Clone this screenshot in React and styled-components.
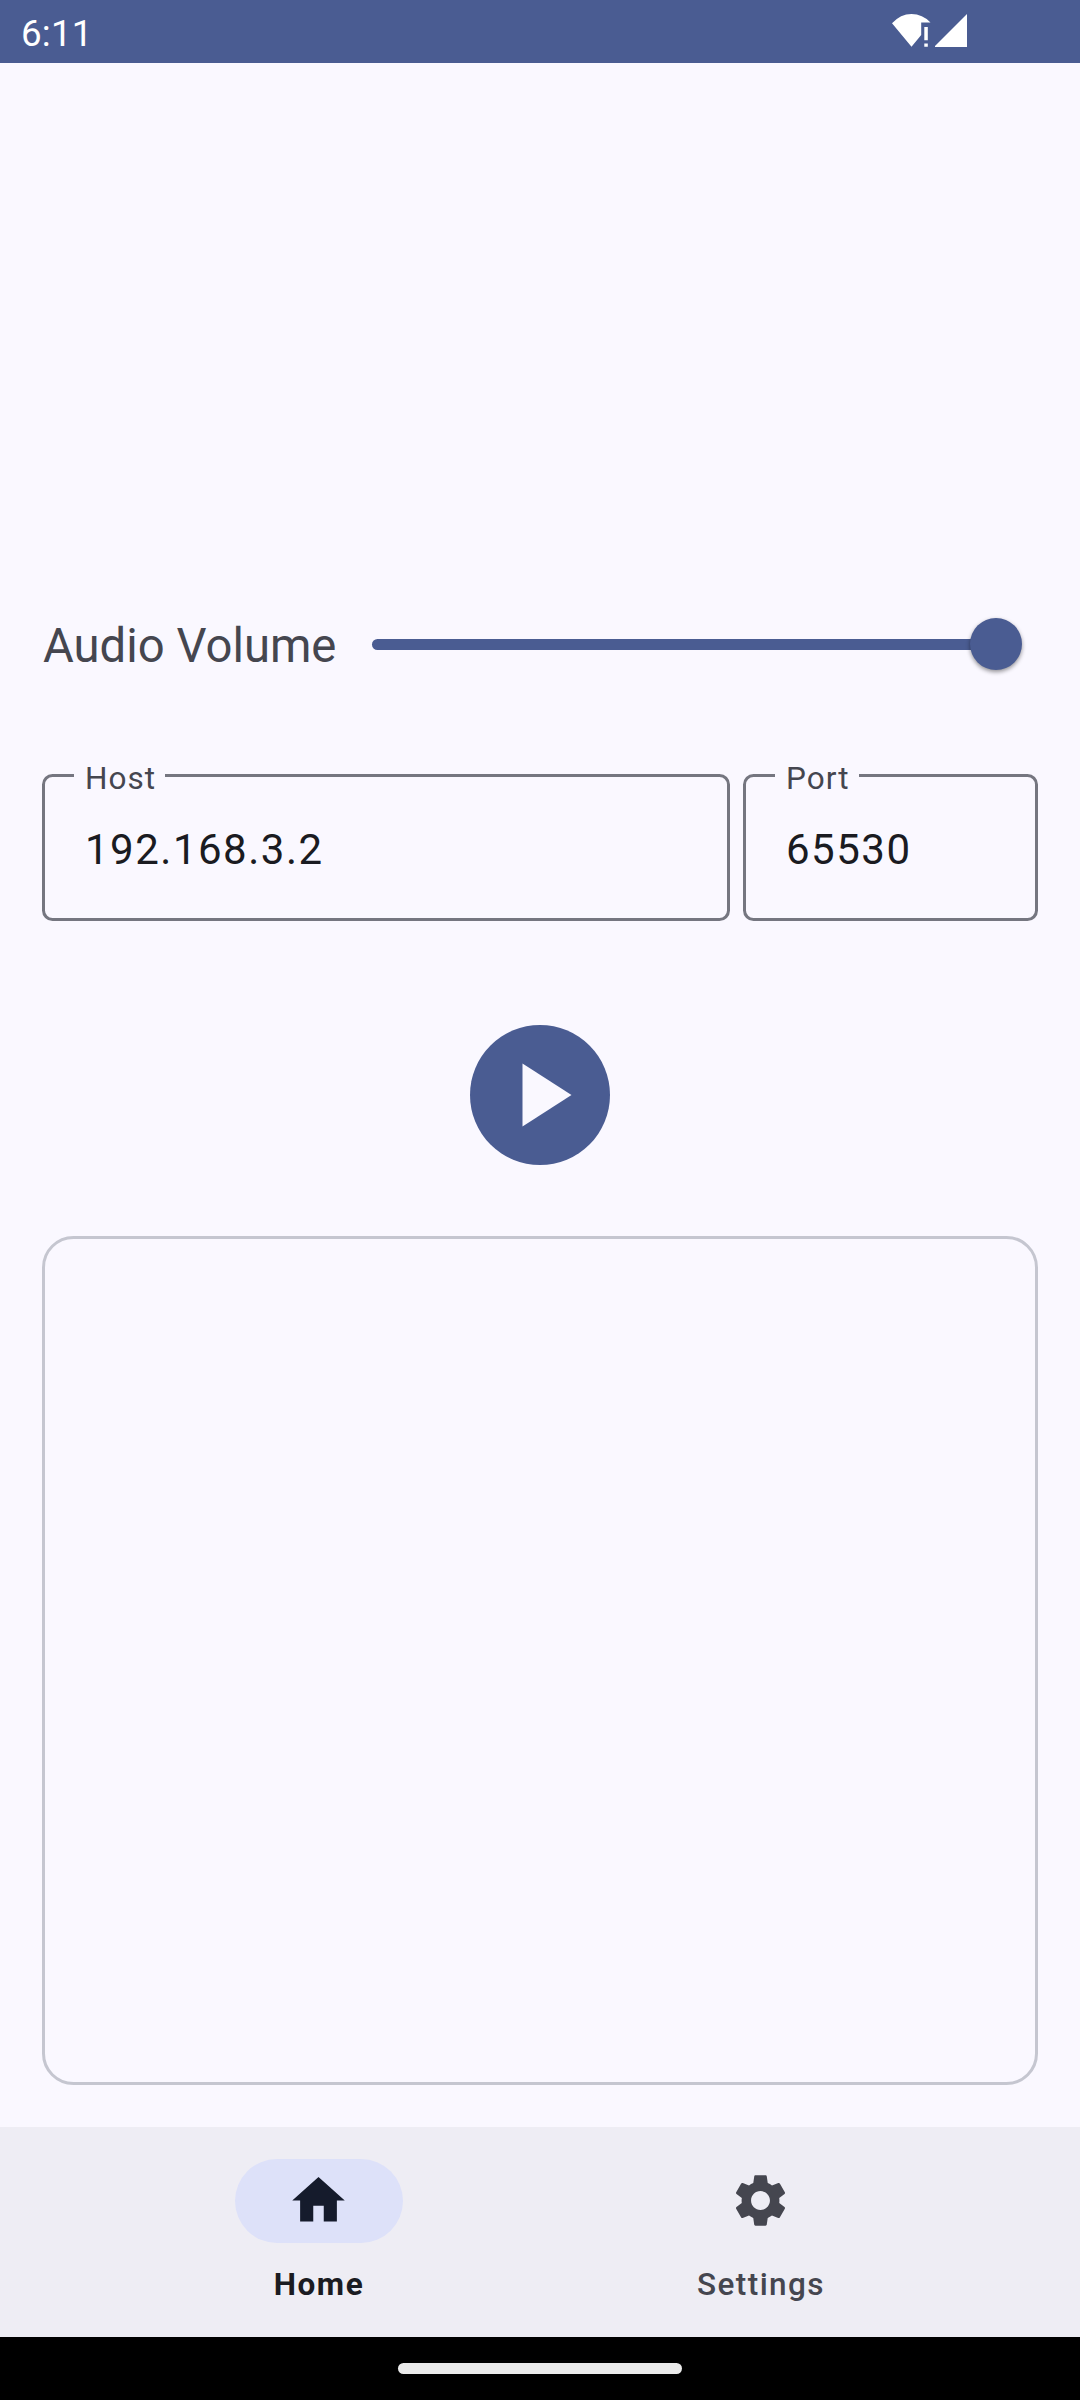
import React from 'react';
import styled, { createGlobalStyle } from 'styled-components';

const color = {
  primary: '#4a5c92',
  surface: '#faf8ff',
  navSurface: '#eeedf4',
  text: '#1a1b21',
  muted: '#45464f',
  outline: '#757680',
  outlineSoft: '#c5c6d0',
  pill: '#dde1f9',
  onPill: '#151b2c',
};

const GlobalStyle = createGlobalStyle`
  * { box-sizing: border-box; }
  body { margin: 0; background: ${color.surface}; font-family: Roboto, sans-serif; }
`;

const Screen = styled.div`
  width: 1080px;
  height: 2400px;
  display: flex;
  flex-direction: column;
  background: ${color.surface};
  overflow: hidden;
`;

const StatusBar = styled.header`
  height: 63px;
  flex: none;
  display: flex;
  justify-content: space-between;
  padding: 0 113px 0 21px;
  background: ${color.primary};
  color: #fff;
`;

const Clock = styled.span`
  font-size: 36.75px;
  line-height: 43px;
  letter-spacing: 0.2px;
  padding-top: 12px;
`;

const StatusIcons = styled.div`
  display: flex;
  gap: 4px;
  padding-top: 14px;
  svg { display: block; }
`;

const Main = styled.main`
  flex: 1;
  display: flex;
  flex-direction: column;
  padding: 554px 42px 42px;
`;

const VolumeRow = styled.div`
  display: flex;
  align-items: center;
  height: 54px;
`;

const VolumeLabel = styled.label`
  width: 329.5px;
  padding: 4px 0 0 1px;
  font-size: 47.25px;
  line-height: 54px;
  white-space: nowrap;
  color: ${color.muted};
`;

const Slider = styled.div`
  width: 650.5px;
  display: flex;
  align-items: center;
`;

const Track = styled.div`
  flex: 1;
  height: 11px;
  margin-right: -26px;
  border-radius: 6px 0 0 6px;
  background: ${color.primary};
`;

const Thumb = styled.div`
  width: 52px;
  height: 52px;
  border-radius: 50%;
  background: ${color.primary};
  box-shadow: 0 2px 4px rgba(0, 0, 0, 0.42);
`;

const Fields = styled.div`
  display: flex;
  gap: 13px;
  margin-top: 90px;
`;

const Field = styled.fieldset`
  width: ${(p) => p.$width}px;
  height: 160px;
  min-width: 0;
  margin: 0;
  padding: 0 0 0 40px;
  border: 3px solid ${color.outline};
  border-radius: 10.5px;
`;

const FieldLabel = styled.legend`
  width: ${(p) => p.$width}px;
  height: 29px;
  margin-left: -11px;
  padding: 1px 0 0 11px;
  font-size: 31.5px;
  line-height: 33px;
  letter-spacing: 1.05px;
  white-space: nowrap;
  color: ${color.muted};
`;

const FieldValue = styled.div`
  font-size: 42px;
  line-height: 49px;
  padding-top: 35px;
  letter-spacing: 1.5px;
  color: ${color.text};
`;

const PlayButton = styled.button`
  width: 140px;
  height: 140px;
  align-self: center;
  margin-top: 104px;
  padding: 0;
  border: 0;
  border-radius: 50%;
  background: ${color.primary};
  svg { display: block; }
`;

const LogPanel = styled.section`
  flex: 1;
  margin-top: 71px;
  border: 3px solid ${color.outlineSoft};
  border-radius: 31.5px;
`;

const NavBar = styled.nav`
  height: 210px;
  flex: none;
  display: flex;
  justify-content: center;
  padding-top: 32px;
  background: ${color.navSurface};
`;

const NavItem = styled.a`
  width: 442px;
  display: flex;
  flex-direction: column;
  align-items: center;
  gap: 21px;
  color: ${(p) => (p.$active ? color.text : color.muted)};
  font-size: 31.5px;
  font-weight: ${(p) => (p.$active ? 700 : 500)};
  line-height: 41px;
  letter-spacing: ${(p) => (p.$active ? 1.6 : 1.4)}px;
`;

const Pill = styled.span`
  width: 168px;
  height: 84px;
  display: flex;
  align-items: center;
  justify-content: center;
  padding: 0 1px 1px 0;
  border-radius: 42px;
  background: ${(p) => (p.$active ? color.pill : 'transparent')};
  color: ${(p) => (p.$active ? color.onPill : color.muted)};
`;

const GestureBar = styled.footer`
  height: 63px;
  flex: none;
  display: flex;
  justify-content: center;
  align-items: center;
  background: #000;
`;

const Handle = styled.div`
  width: 284px;
  height: 11px;
  border-radius: 5.5px;
  background: #ebebeb;
`;

const NavIcon = ({ d }) => (
  <svg width="63" height="63" viewBox="0 0 24 24" fill="currentColor">
    <path d={d} />
  </svg>
);

const HOME = 'M10 20v-6h4v6h5v-8h3L12 3 2 12h3v8z';
const GEAR =
  'M19.14,12.94c0.04,-0.3 0.06,-0.61 0.06,-0.94c0,-0.32 -0.02,-0.64 -0.07,-0.94l2.03,-1.58c0.18,-0.14 0.23,-0.41 0.12,-0.61l-1.92,-3.32c-0.12,-0.22 -0.37,-0.29 -0.59,-0.22l-2.39,0.96c-0.5,-0.38 -1.03,-0.7 -1.62,-0.94L14.4,2.81c-0.04,-0.24 -0.24,-0.41 -0.48,-0.41h-3.84c-0.24,0 -0.43,0.17 -0.47,0.41L9.25,5.35C8.66,5.59 8.12,5.92 7.63,6.29L5.24,5.33c-0.22,-0.08 -0.47,0 -0.59,0.22L2.74,8.87C2.62,9.08 2.66,9.34 2.86,9.48l2.03,1.58C4.84,11.36 4.8,11.69 4.8,12s0.02,0.64 0.07,0.94l-2.03,1.58c-0.18,0.14 -0.23,0.41 -0.12,0.61l1.92,3.32c0.12,0.22 0.37,0.29 0.59,0.22l2.39,-0.96c0.5,0.38 1.03,0.7 1.62,0.94l0.36,2.54c0.05,0.24 0.24,0.41 0.48,0.41h3.84c0.24,0 0.44,-0.17 0.47,-0.41l0.36,-2.54c0.59,-0.24 1.13,-0.56 1.62,-0.94l2.39,0.96c0.22,0.08 0.47,0 0.59,-0.22l1.92,-3.32c0.12,-0.22 0.07,-0.47 -0.12,-0.61L19.14,12.94zM12,15.6c-1.98,0 -3.6,-1.62 -3.6,-3.6s1.62,-3.6 3.6,-3.6s3.6,1.62 3.6,3.6S13.98,15.6 12,15.6z';

export default function App() {
  return (
    <>
      <GlobalStyle />
      <Screen>
        <StatusBar>
          <Clock>6:11</Clock>
          <StatusIcons>
            <svg width="39" height="33" viewBox="0 0 39 33" fill="#fff">
              <path d="M0 9.3Q8.500 0 19.500 0T38.500 8.500H29.200V21L19.500 32.700Z" />
              <path d="M32.300 13h3.500v13.300h-3.500zM32.300 29.600h3.500v3.200h-3.500z" />
            </svg>
            <svg width="32" height="33" viewBox="0 0 32 33" fill="#fff">
              <path d="M32 0V33H-1Z" />
            </svg>
          </StatusIcons>
        </StatusBar>
        <Main>
          <VolumeRow>
            <VolumeLabel>Audio Volume</VolumeLabel>
            <Slider>
              <Track />
              <Thumb />
            </Slider>
          </VolumeRow>
          <Fields>
            <Field $width={688}>
              <FieldLabel $width={91}>Host</FieldLabel>
              <FieldValue>192.168.3.2</FieldValue>
            </Field>
            <Field $width={295}>
              <FieldLabel $width={84}>Port</FieldLabel>
              <FieldValue>65530</FieldValue>
            </Field>
          </Fields>
          <PlayButton aria-label="Play">
            <svg width="140" height="140" viewBox="0 0 140 140" fill={color.surface}>
              <path d="M52.500 38.500v63L101.500 70z" />
            </svg>
          </PlayButton>
          <LogPanel />
        </Main>
        <NavBar>
          <NavItem $active>
            <Pill $active>
              <NavIcon d={HOME} />
            </Pill>
            Home
          </NavItem>
          <NavItem>
            <Pill>
              <NavIcon d={GEAR} />
            </Pill>
            Settings
          </NavItem>
        </NavBar>
        <GestureBar>
          <Handle />
        </GestureBar>
      </Screen>
    </>
  );
}
